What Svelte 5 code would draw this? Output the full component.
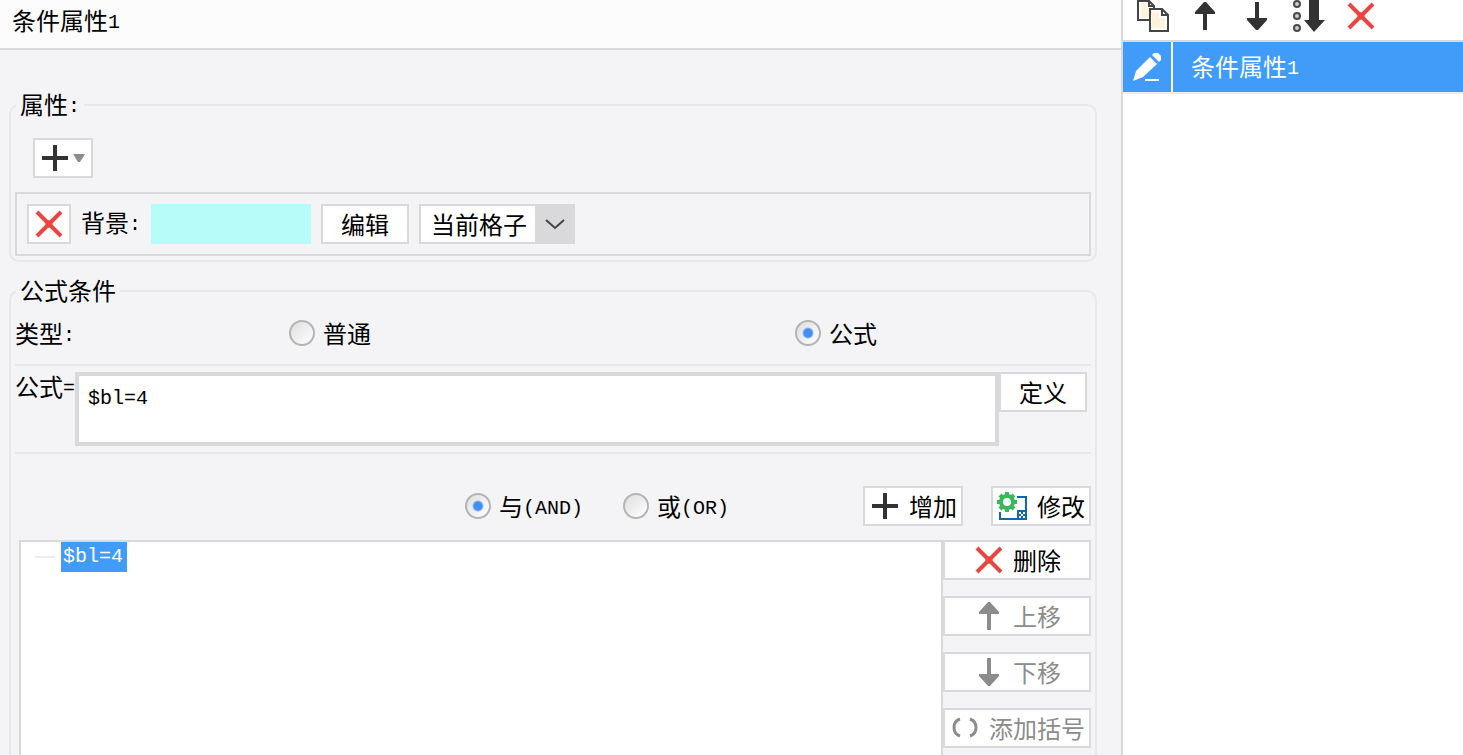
<script>
  let kind = $state('formula');
  let join = $state('and');
  let formula = $state('$bl=4');
  let scope = $state('当前格子');
</script>

{#snippet cross()}
  <svg class="icon" viewBox="0 0 32 32" aria-hidden="true">
    <path d="M4 4 28 28M28 4 4 28" fill="none" stroke="#e9463f" stroke-width="4" />
    <path d="M16 12 20 16 16 20 12 16Z" fill="#e9463f" />
  </svg>
{/snippet}

{#snippet plus()}
  <svg class="icon" viewBox="0 0 32 32" aria-hidden="true">
    <path d="M16 3V29M3 16H29" fill="none" stroke="#333" stroke-width="4" />
  </svg>
{/snippet}

{#snippet up()}
  <svg class="icon" viewBox="0 0 32 32" aria-hidden="true">
    <path d="M15 2H17L26 12V14H18V30H14V14H6V12Z" fill="currentColor" />
  </svg>
{/snippet}

{#snippet down()}
  <svg class="icon" viewBox="0 0 32 32" aria-hidden="true">
    <path d="M14 2H18V18H26V20L17 30H15L6 20V18H14Z" fill="currentColor" />
  </svg>
{/snippet}

<div class="app">
  <main class="editor">
    <h1 class="title">条件属性<span class="mono">1</span></h1>

    <div class="groups">
      <fieldset class="group">
        <legend>属性<span class="mono">:</span></legend>
        <button class="btn add" aria-label="+">
          {@render plus()}
          <svg class="caret" viewBox="0 0 12 8" aria-hidden="true"><path d="M0 0H12L7 8H5Z" fill="#8c8c8c" /></svg>
        </button>
        <div class="attribute">
          <button class="btn remove" aria-label="×">{@render cross()}</button>
          <span class="name">背景<span class="mono">:</span></span>
          <span class="swatch"></span>
          <button class="btn text">编辑</button>
          <span class="select">
            <select bind:value={scope} aria-label="背景">
              <option>当前格子</option>
            </select>
            <svg viewBox="0 0 40 36" aria-hidden="true">
              <path d="M11 14 20 22 29 14" fill="none" stroke="#444" stroke-width="2" />
            </svg>
          </span>
        </div>
      </fieldset>

      <fieldset class="group">
        <legend>公式条件</legend>
        <div class="kinds">
          <span>类型<span class="mono">:</span></span>
          <label><input type="radio" value="normal" bind:group={kind} />普通</label>
          <label><input type="radio" value="formula" bind:group={kind} />公式</label>
        </div>

        <div class="formula">
          <label for="formula"><span>公式<span class="mono">=</span></span></label>
          <textarea id="formula" bind:value={formula} spellcheck="false"></textarea>
          <button class="btn text">定义</button>
        </div>

        <div class="joins">
          <label><input type="radio" value="and" bind:group={join} /><span>与<span class="mono">(AND)</span></span></label>
          <label><input type="radio" value="or" bind:group={join} /><span>或<span class="mono">(OR)</span></span></label>
          <div class="actions">
            <button class="btn wide">{@render plus()}增加</button>
            <button class="btn wide">
              <svg class="icon" viewBox="0 0 32 32" aria-hidden="true">
                <path d="M20 7H29V29H3V22" fill="none" stroke="#0d68b1" stroke-width="2" />
                <path d="M20 20H30V30H20Z" fill="#0d68b1" />
                <path d="M22 22h2v2h-2zM26 22h2v2h-2zM24 24h2v2h-2zM22 26h2v2h-2zM26 26h2v2h-2z" fill="#fff" />
                <circle cx="10" cy="12" r="6" fill="#fff" stroke="#35bb59" stroke-width="4" />
                <path
                  d="M10 2V6M10 18V22M0 12H4M16 12H20M3 5 6 8M14 16 17 19M17 5 14 8M6 16 3 19"
                  fill="none"
                  stroke="#35bb59"
                  stroke-width="4"
                />
              </svg>修改
            </button>
          </div>
        </div>

        <div class="result">
          <ul class="tree">
            <li><span class="branch"></span><span class="selected">$bl=4</span></li>
          </ul>
          <div class="tools">
            <button class="btn">{@render cross()}删除</button>
            <button class="btn" disabled>{@render up()}上移</button>
            <button class="btn" disabled>{@render down()}下移</button>
            <button class="btn" disabled>
              <svg class="icon" viewBox="0 0 32 32" aria-hidden="true">
                <path d="M11 7Q5 9 5 15.500T11 24M21 7Q27 9 27 15.500T21 24" fill="none" stroke="currentColor" stroke-width="3" />
              </svg>添加括号
            </button>
          </div>
        </div>
      </fieldset>
    </div>
  </main>

  <aside class="side">
    <div class="toolbar">
      <button aria-label="复制">
        <svg class="icon" viewBox="0 0 32 32" aria-hidden="true">
          <path d="M1 1H12L17 6V20H1Z" fill="#fff" stroke="#454545" stroke-width="2" />
          <path d="M4 3H10V8H14V18H4Z" fill="#fff3dc" />
          <path d="M12 0V6H17" fill="none" stroke="#454545" stroke-width="2" />
          <path d="M13 9H25L31 15V31H13Z" fill="#fff" stroke="#454545" stroke-width="2" />
          <path d="M15 12H22V18H28V28H15Z" fill="#fff3dc" />
          <path d="M25 9V15H31" fill="none" stroke="#454545" stroke-width="2" />
        </svg>
      </button>
      <button aria-label="上移">{@render up()}</button>
      <button aria-label="下移">{@render down()}</button>
      <button aria-label="排序">
        <svg class="icon" viewBox="0 0 32 32" aria-hidden="true">
          <g fill="#ccc" stroke="#4a4a4a" stroke-width="2">
            <circle cx="4" cy="4" r="3" /><circle cx="4" cy="16" r="3" /><circle cx="4" cy="28" r="3" />
          </g>
          <path d="M16 0H26V20H32L21 32 11 20H16Z" fill="#333" />
        </svg>
      </button>
      <button aria-label="删除">{@render cross()}</button>
    </div>
    <ul class="items">
      <li>
        <span class="edit">
          <svg class="icon" viewBox="0 0 32 32" aria-hidden="true">
            <path d="M2 30 5 20 19 6 26 13 12 26Z" fill="#fff" />
            <path d="M21 4 23 2H27L30 5V9L28 11Z" fill="#fff" />
            <path d="M14 29H28" stroke="#fff" stroke-width="2" />
          </svg>
        </span>
        <span class="label">条件属性<span class="mono">1</span></span>
      </li>
    </ul>
  </aside>
</div>

<style>
  :global(body) {
    margin: 0;
    overflow: hidden;
  }

  .app {
    display: flex;
    height: 100vh;
    overflow: hidden;
    background: #f4f4f7;
    color: #000;
    font: 24px/28px 'Noto Sans CJK SC', sans-serif;
  }

  .app * {
    box-sizing: border-box;
  }

  button,
  select,
  input {
    margin: 0;
    padding: 0;
    border: 0;
    font: inherit;
    color: inherit;
  }

  .mono {
    font-family: 'Liberation Mono', monospace;
    font-size: 20px;
    line-height: 0;
    vertical-align: 2px;
  }

  .icon {
    display: block;
    flex: none;
    width: 32px;
    height: 32px;
  }

  .editor {
    flex: 1;
    min-width: 0;
  }

  .title {
    margin: 0;
    padding: 6px 12px 14px;
    border-bottom: 2px solid #d9d9dc;
    background: #fcfcfc;
    font-size: 24px;
    font-weight: 400;
  }

  .groups {
    display: flex;
    flex-direction: column;
    gap: 15px;
    padding: 41px 24px 0 9px;
  }

  .group {
    min-width: 0;
    margin: 0;
    padding: 0 4px 4px;
    border: 2px solid #e8e8ea;
    border-radius: 10px;
  }

  legend {
    margin-left: 1px;
    padding: 0 4px;
    line-height: 26px;
    padding-bottom: 2px;
  }

  .btn {
    display: flex;
    align-items: center;
    justify-content: center;
    gap: 8px;
    height: 40px;
    border: 2px solid #d9d9dc;
    background: #fff;
    white-space: nowrap;
  }

  .btn:disabled {
    color: #8c8c8c;
  }

  .btn.text {
    width: 88px;
  }

  .btn.wide {
    width: 100px;
  }

  .btn.remove {
    width: 44px;
  }

  .btn.add {
    justify-content: flex-start;
    gap: 2px;
    width: 60px;
    margin: 19px 0 14px 18px;
    padding: 0 4px;
  }

  .caret {
    width: 12px;
    height: 8px;
  }

  .attribute {
    display: flex;
    align-items: center;
    gap: 10px;
    padding: 10px;
    border: 2px solid #d9d9dc;
  }

  .name {
    width: 60px;
    padding-bottom: 4px;
  }

  .swatch {
    width: 160px;
    height: 40px;
    background: #b8fcf9;
  }

  .select {
    position: relative;
    width: 156px;
    height: 40px;
  }

  .select select {
    width: 100%;
    height: 100%;
    padding-left: 10px;
    border: 2px solid #d9d9dc;
    border-radius: 0;
    appearance: none;
    background: #fff;
  }

  .select svg {
    position: absolute;
    top: 2px;
    right: 0;
    width: 40px;
    height: 36px;
    background: #d9d9dc;
    pointer-events: none;
  }

  .kinds {
    display: grid;
    grid-template-columns: 274px 1fr 296px;
    align-items: center;
    height: 59px;
    padding-bottom: 4px;
  }

  label {
    display: flex;
    align-items: center;
    gap: 8px;
  }

  input[type='radio'] {
    width: 26px;
    height: 26px;
    border: 2px solid #b4b4b4;
    border-radius: 50%;
    appearance: none;
    background: linear-gradient(135deg, #dedede, #fff);
  }

  input[type='radio']:checked {
    background: radial-gradient(circle, #438df6 4px, transparent 6px), linear-gradient(135deg, #dedede, #fff);
  }

  .formula {
    display: flex;
    align-items: flex-start;
    padding: 6px 4px 6px 0;
    border: solid #e8e8ea;
    border-width: 2px 0;
  }

  textarea {
    flex: 1;
    min-width: 0;
    height: 74px;
    margin: 0;
    padding: 9px;
    border: 4px solid #d9d9dc;
    border-radius: 0;
    outline: 0;
    resize: none;
    background: #fff;
    color: #000;
    font: 20px/28px 'Liberation Mono', monospace;
  }

  .joins {
    display: flex;
    align-items: center;
    gap: 40px;
    padding: 32px 0 14px 450px;
  }

  .actions {
    display: flex;
    gap: 28px;
    margin-left: auto;
  }

  .result {
    display: flex;
    padding-left: 4px;
  }

  .tree {
    flex: 1;
    min-height: 300px;
    margin: 0;
    padding: 0 14px;
    border: 2px solid #d9d9dc;
    background: #fff;
    list-style: none;
  }

  .tree li {
    display: flex;
    align-items: center;
    gap: 6px;
  }

  .branch {
    width: 20px;
    height: 2px;
    background: #eee;
  }

  .selected {
    padding: 1px 4px 1px 2px;
    background: #419bf9;
    color: #fff;
    font: 20px/28px 'Liberation Mono', monospace;
  }

  .tools {
    display: flex;
    flex-direction: column;
    gap: 16px;
    width: 148px;
  }

  .side {
    display: flex;
    flex-direction: column;
    width: 342px;
    border-left: 2px solid #d9d9dc;
    background: #fff;
  }

  .toolbar {
    display: flex;
    gap: 20px;
    padding: 0 14px 8px;
    border-bottom: 2px solid #d9d9dc;
    color: #333;
  }

  .toolbar button {
    background: none;
  }

  .items {
    margin: 0;
    padding: 0;
    list-style: none;
  }

  .items li {
    display: flex;
    height: 52px;
    border-bottom: 2px solid #eee;
    background: #419bf9;
    color: #fff;
  }

  .edit {
    display: grid;
    place-items: center;
    width: 50px;
    border-right: 2px solid #fff;
  }

  .label {
    padding: 10px 18px;
  }
</style>
